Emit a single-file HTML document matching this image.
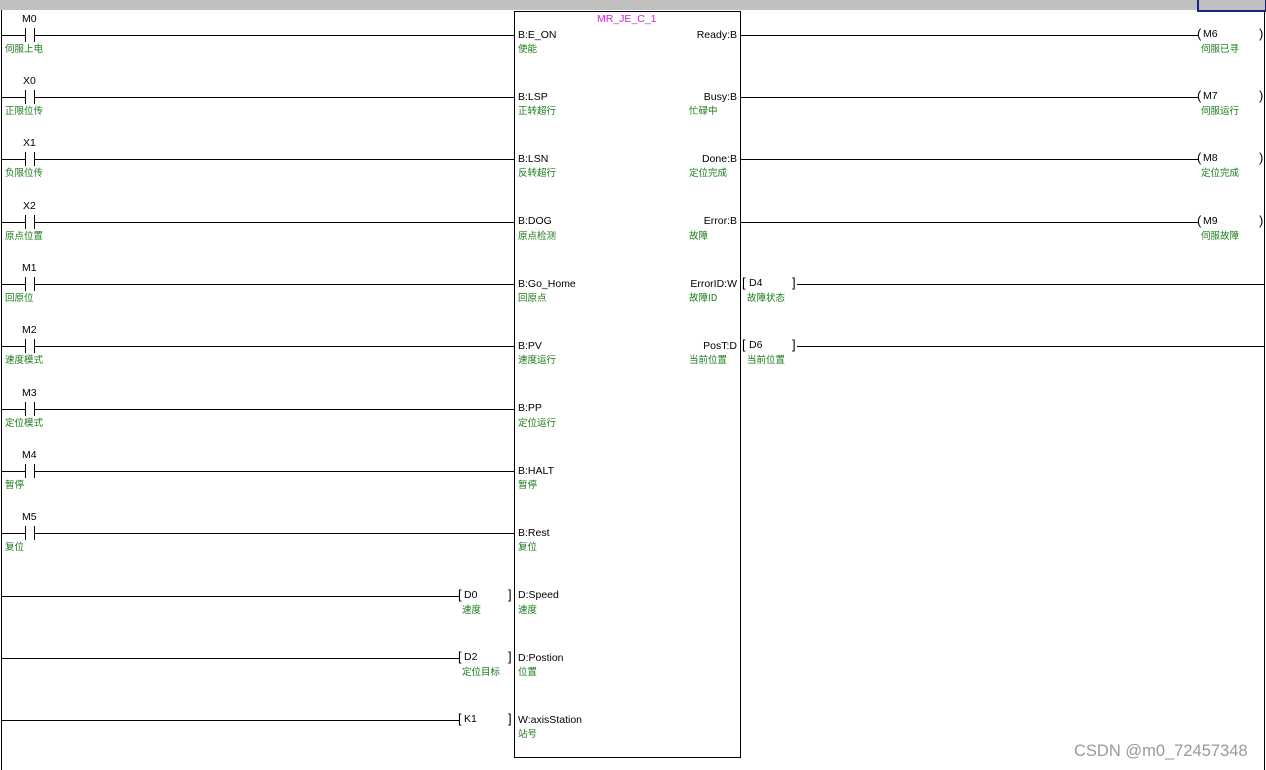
<!DOCTYPE html><html><head><meta charset="utf-8"><style>
body{margin:0;width:1266px;height:770px;background:#fff;position:relative;overflow:hidden;font-family:"Liberation Sans","Noto Sans CJK SC",sans-serif}
.a{position:absolute}
.h{position:absolute;height:1px;background:#000}
.v{position:absolute;width:1px;background:#000}
.t{position:absolute;font-size:10.5px;color:#000;line-height:12px;white-space:nowrap}
.c{position:absolute;font-size:9.5px;color:#1a7a1a;line-height:11px;white-space:nowrap;font-family:"Noto Sans CJK SC",sans-serif}
.r{text-align:right}
.b{position:absolute;font-size:13px;line-height:14px;color:#000}
</style></head><body>
<div class="a" style="left:0;top:0;width:1266px;height:10px;background:#c0c0c0"></div>
<div class="a" style="left:1197px;top:-2px;width:66px;height:10px;border:2px solid #1a237e;background:#c0c0c0"></div>
<div class="v" style="left:1px;top:10px;height:760px"></div>
<div class="v" style="left:1264px;top:10px;height:760px"></div>
<div class="a" style="left:514px;top:11px;width:225px;height:745px;border:1px solid #000"></div>
<div class="t" style="left:597px;top:13px;color:#d020d0">MR_JE_C_1</div>

<div class="h" style="left:2px;top:35px;width:24px"></div><div class="h" style="left:35px;top:35px;width:479px"></div>
<div class="v" style="left:25px;top:28px;height:14px"></div><div class="v" style="left:34px;top:28px;height:14px"></div>
<div class="t" style="left:22px;top:13px">M0</div><div class="c" style="left:5px;top:43px">伺服上电</div>

<div class="h" style="left:2px;top:97px;width:24px"></div><div class="h" style="left:35px;top:97px;width:479px"></div>
<div class="v" style="left:25px;top:90px;height:14px"></div><div class="v" style="left:34px;top:90px;height:14px"></div>
<div class="t" style="left:23px;top:75px">X0</div><div class="c" style="left:5px;top:105px">正限位传</div>

<div class="h" style="left:2px;top:159px;width:24px"></div><div class="h" style="left:35px;top:159px;width:479px"></div>
<div class="v" style="left:25px;top:152px;height:14px"></div><div class="v" style="left:34px;top:152px;height:14px"></div>
<div class="t" style="left:23px;top:137px">X1</div><div class="c" style="left:5px;top:167px">负限位传</div>

<div class="h" style="left:2px;top:222px;width:24px"></div><div class="h" style="left:35px;top:222px;width:479px"></div>
<div class="v" style="left:25px;top:215px;height:14px"></div><div class="v" style="left:34px;top:215px;height:14px"></div>
<div class="t" style="left:23px;top:200px">X2</div><div class="c" style="left:5px;top:230px">原点位置</div>

<div class="h" style="left:2px;top:284px;width:24px"></div><div class="h" style="left:35px;top:284px;width:479px"></div>
<div class="v" style="left:25px;top:277px;height:14px"></div><div class="v" style="left:34px;top:277px;height:14px"></div>
<div class="t" style="left:22px;top:262px">M1</div><div class="c" style="left:5px;top:292px">回原位</div>

<div class="h" style="left:2px;top:346px;width:24px"></div><div class="h" style="left:35px;top:346px;width:479px"></div>
<div class="v" style="left:25px;top:339px;height:14px"></div><div class="v" style="left:34px;top:339px;height:14px"></div>
<div class="t" style="left:22px;top:324px">M2</div><div class="c" style="left:5px;top:354px">速度模式</div>

<div class="h" style="left:2px;top:409px;width:24px"></div><div class="h" style="left:35px;top:409px;width:479px"></div>
<div class="v" style="left:25px;top:402px;height:14px"></div><div class="v" style="left:34px;top:402px;height:14px"></div>
<div class="t" style="left:22px;top:387px">M3</div><div class="c" style="left:5px;top:417px">定位模式</div>

<div class="h" style="left:2px;top:471px;width:24px"></div><div class="h" style="left:35px;top:471px;width:479px"></div>
<div class="v" style="left:25px;top:464px;height:14px"></div><div class="v" style="left:34px;top:464px;height:14px"></div>
<div class="t" style="left:22px;top:449px">M4</div><div class="c" style="left:5px;top:479px">暂停</div>

<div class="h" style="left:2px;top:533px;width:24px"></div><div class="h" style="left:35px;top:533px;width:479px"></div>
<div class="v" style="left:25px;top:526px;height:14px"></div><div class="v" style="left:34px;top:526px;height:14px"></div>
<div class="t" style="left:22px;top:511px">M5</div><div class="c" style="left:5px;top:541px">复位</div>

<div class="h" style="left:2px;top:596px;width:457px"></div>
<div class="b" style="left:458px;top:588px">[</div><div class="t" style="left:464px;top:589px">D0</div><div class="b" style="left:508px;top:588px">]</div><div class="c" style="left:462px;top:604px">速度</div>
<div class="h" style="left:2px;top:658px;width:457px"></div>
<div class="b" style="left:458px;top:650px">[</div><div class="t" style="left:464px;top:651px">D2</div><div class="b" style="left:508px;top:650px">]</div><div class="c" style="left:462px;top:666px">定位目标</div>
<div class="h" style="left:2px;top:720px;width:457px"></div>
<div class="b" style="left:458px;top:712px">[</div><div class="t" style="left:464px;top:713px">K1</div><div class="b" style="left:508px;top:712px">]</div>

<div class="t" style="left:518px;top:29px">B:E_ON</div><div class="c" style="left:518px;top:43px">使能</div>
<div class="t" style="left:518px;top:91px">B:LSP</div><div class="c" style="left:518px;top:105px">正转超行</div>
<div class="t" style="left:518px;top:153px">B:LSN</div><div class="c" style="left:518px;top:167px">反转超行</div>
<div class="t" style="left:518px;top:215px">B:DOG</div><div class="c" style="left:518px;top:230px">原点检测</div>
<div class="t" style="left:518px;top:278px">B:Go_Home</div><div class="c" style="left:518px;top:292px">回原点</div>
<div class="t" style="left:518px;top:340px">B:PV</div><div class="c" style="left:518px;top:354px">速度运行</div>
<div class="t" style="left:518px;top:402px">B:PP</div><div class="c" style="left:518px;top:417px">定位运行</div>
<div class="t" style="left:518px;top:465px">B:HALT</div><div class="c" style="left:518px;top:479px">暂停</div>
<div class="t" style="left:518px;top:527px">B:Rest</div><div class="c" style="left:518px;top:541px">复位</div>
<div class="t" style="left:518px;top:589px">D:Speed</div><div class="c" style="left:518px;top:604px">速度</div>
<div class="t" style="left:518px;top:652px">D:Postion</div><div class="c" style="left:518px;top:666px">位置</div>
<div class="t" style="left:518px;top:714px">W:axisStation</div><div class="c" style="left:518px;top:728px">站号</div>

<div class="t r" style="left:640px;width:97px;top:29px">Ready:B</div>
<div class="t r" style="left:640px;width:97px;top:91px">Busy:B</div><div class="c" style="left:689px;top:105px">忙碌中</div>
<div class="t r" style="left:640px;width:97px;top:153px">Done:B</div><div class="c" style="left:689px;top:167px">定位完成</div>
<div class="t r" style="left:640px;width:97px;top:215px">Error:B</div><div class="c" style="left:689px;top:230px">故障</div>
<div class="t r" style="left:640px;width:97px;top:278px">ErrorID:W</div><div class="c" style="left:689px;top:292px">故障ID</div>
<div class="t r" style="left:640px;width:97px;top:340px">PosT:D</div><div class="c" style="left:689px;top:354px">当前位置</div>

<div class="h" style="left:741px;top:35px;width:457px"></div><div class="b" style="left:1197px;top:27px">(</div><div class="t" style="left:1203px;top:28px">M6</div><div class="b" style="left:1259px;top:27px">)</div><div class="c" style="left:1201px;top:43px">伺服已寻</div>
<div class="h" style="left:741px;top:97px;width:457px"></div><div class="b" style="left:1197px;top:89px">(</div><div class="t" style="left:1203px;top:90px">M7</div><div class="b" style="left:1259px;top:89px">)</div><div class="c" style="left:1201px;top:105px">伺服运行</div>
<div class="h" style="left:741px;top:159px;width:457px"></div><div class="b" style="left:1197px;top:151px">(</div><div class="t" style="left:1203px;top:152px">M8</div><div class="b" style="left:1259px;top:151px">)</div><div class="c" style="left:1201px;top:167px">定位完成</div>
<div class="h" style="left:741px;top:222px;width:457px"></div><div class="b" style="left:1197px;top:214px">(</div><div class="t" style="left:1203px;top:215px">M9</div><div class="b" style="left:1259px;top:214px">)</div><div class="c" style="left:1201px;top:230px">伺服故障</div>

<div class="b" style="left:742px;top:276px">[</div><div class="t" style="left:749px;top:277px">D4</div><div class="b" style="left:792px;top:276px">]</div><div class="h" style="left:797px;top:284px;width:467px"></div><div class="c" style="left:747px;top:292px">故障状态</div>
<div class="b" style="left:742px;top:338px">[</div><div class="t" style="left:749px;top:339px">D6</div><div class="b" style="left:792px;top:338px">]</div><div class="h" style="left:797px;top:346px;width:467px"></div><div class="c" style="left:747px;top:354px">当前位置</div>

<div class="a" style="left:1074px;top:742px;font-size:16.5px;color:#999">CSDN @m0_72457348</div>
</body></html>
